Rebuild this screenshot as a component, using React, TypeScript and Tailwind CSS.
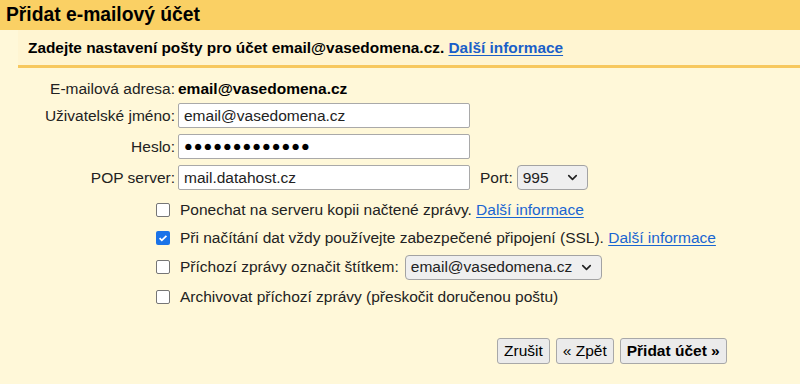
import { ChevronDown } from 'lucide-react';

const font = { fontFamily: '"Liberation Sans", Arial, sans-serif' };

function Field({ label, children }: { label: string; children: React.ReactNode }) {
    return (
        <div className="flex h-[25px] items-center">
            <div className="w-[178px] pr-[3px] text-right">{label}</div>
            {children}
        </div>
    );
}

function TextBox({ value, className = '' }: { value: string; className?: string }) {
    return (
        <div
            className={`flex h-[25px] w-[292px] items-center rounded-[2px] border border-[#a9a9a9] bg-white px-[5px] ${className}`}
        >
            {value}
        </div>
    );
}

function Select({ value, width }: { value: string; width: string }) {
    return (
        <div
            className={`flex h-[25px] ${width} items-center justify-between rounded-[4px] border border-[#a3a3a3] bg-[#efefef] pl-[5px] pr-[7px]`}
        >
            <span>{value}</span>
            <ChevronDown className="h-[15px] w-[15px]" strokeWidth={2.6} />
        </div>
    );
}

function Check({ checked }: { checked?: boolean }) {
    return checked ? (
        <span className="flex h-[14px] w-[14px] items-center justify-center rounded-[2px] bg-[#1a73e8]">
            <svg viewBox="0 0 14 14" className="h-[12px] w-[12px]" fill="none" stroke="white" strokeWidth="2">
                <path d="M3 7.2l2.6 2.6L11 4.4" />
            </svg>
        </span>
    ) : (
        <span className="h-[14px] w-[14px] rounded-[2px] border border-[#767676] bg-white" />
    );
}

function Link({ children }: { children: React.ReactNode }) {
    return <span className="text-[#1a66d1] underline underline-offset-2">{children}</span>;
}

function Btn({ children, bold }: { children: React.ReactNode; bold?: boolean }) {
    return (
        <div
            className={`flex h-[26px] items-center rounded-[3px] border border-[#a8a8a8] bg-[#ebebeb] px-[6px] ${bold ? 'font-bold' : ''}`}
        >
            {children}
        </div>
    );
}

export default function App() {
    return (
        <div className="h-[384px] w-[800px] overflow-hidden bg-[#fff8d9] text-[15.5px] text-[#222]" style={font}>
            <div className="flex h-[30px] items-center bg-[#fad064] pl-[6px] text-[19.3px] font-bold text-black">
                Přidat e-mailový účet
            </div>
            <div className="ml-[18px] flex h-[38px] items-center border-b-[3px] border-[#f7c85e] bg-[#fff5d2] pl-[10px] text-[15.4px] font-bold text-black">
                Zadejte nastavení pošty pro účet email@vasedomena.cz.&nbsp;
                <span className="text-[#1a5fc8] underline underline-offset-2">Další informace</span>
            </div>

            <div className="mt-[10px] flex flex-col">
                <div className="flex h-[22px] items-center">
                    <div className="w-[178px] pr-[3px] text-right">E-mailová adresa:</div>
                    <div className="font-bold text-black">email@vasedomena.cz</div>
                </div>
                <div className="mt-[3px] flex flex-col gap-[6px]">
                    <Field label="Uživatelské jméno:">
                        <TextBox value="email@vasedomena.cz" />
                    </Field>
                    <Field label="Heslo:">
                        <TextBox value="●●●●●●●●●●●●●" className="text-[14.5px] tracking-[1px] text-black" />
                    </Field>
                    <Field label="POP server:">
                        <TextBox value="mail.datahost.cz" />
                        <span className="ml-[10px] mr-[4px]">Port:</span>
                        <Select value="995" width="w-[71px]" />
                    </Field>
                </div>

                <div className="ml-[156px] mt-[6px] flex flex-col">
                    <div className="flex h-[28px] items-center gap-[10px]">
                        <Check />
                        <span>
                            Ponechat na serveru kopii načtené zprávy. <Link>Další informace</Link>
                        </span>
                    </div>
                    <div className="flex h-[28px] items-center gap-[10px]">
                        <Check checked />
                        <span>
                            Při načítání dat vždy používejte zabezpečené připojení (SSL). <Link>Další informace</Link>
                        </span>
                    </div>
                    <div className="flex h-[30px] items-center gap-[10px]">
                        <Check />
                        <span className="-mr-[4px]">Příchozí zprávy označit štítkem:</span>
                        <Select value="email@vasedomena.cz" width="w-[197px]" />
                    </div>
                    <div className="flex h-[30px] items-center gap-[10px]">
                        <Check />
                        <span>Archivovat příchozí zprávy (přeskočit doručenou poštu)</span>
                    </div>
                </div>

                <div className="ml-[497px] mt-[26px] flex gap-[6px] text-black">
                    <Btn>Zrušit</Btn>
                    <Btn>« Zpět</Btn>
                    <Btn bold>Přidat účet »</Btn>
                </div>
            </div>
        </div>
    );
}
